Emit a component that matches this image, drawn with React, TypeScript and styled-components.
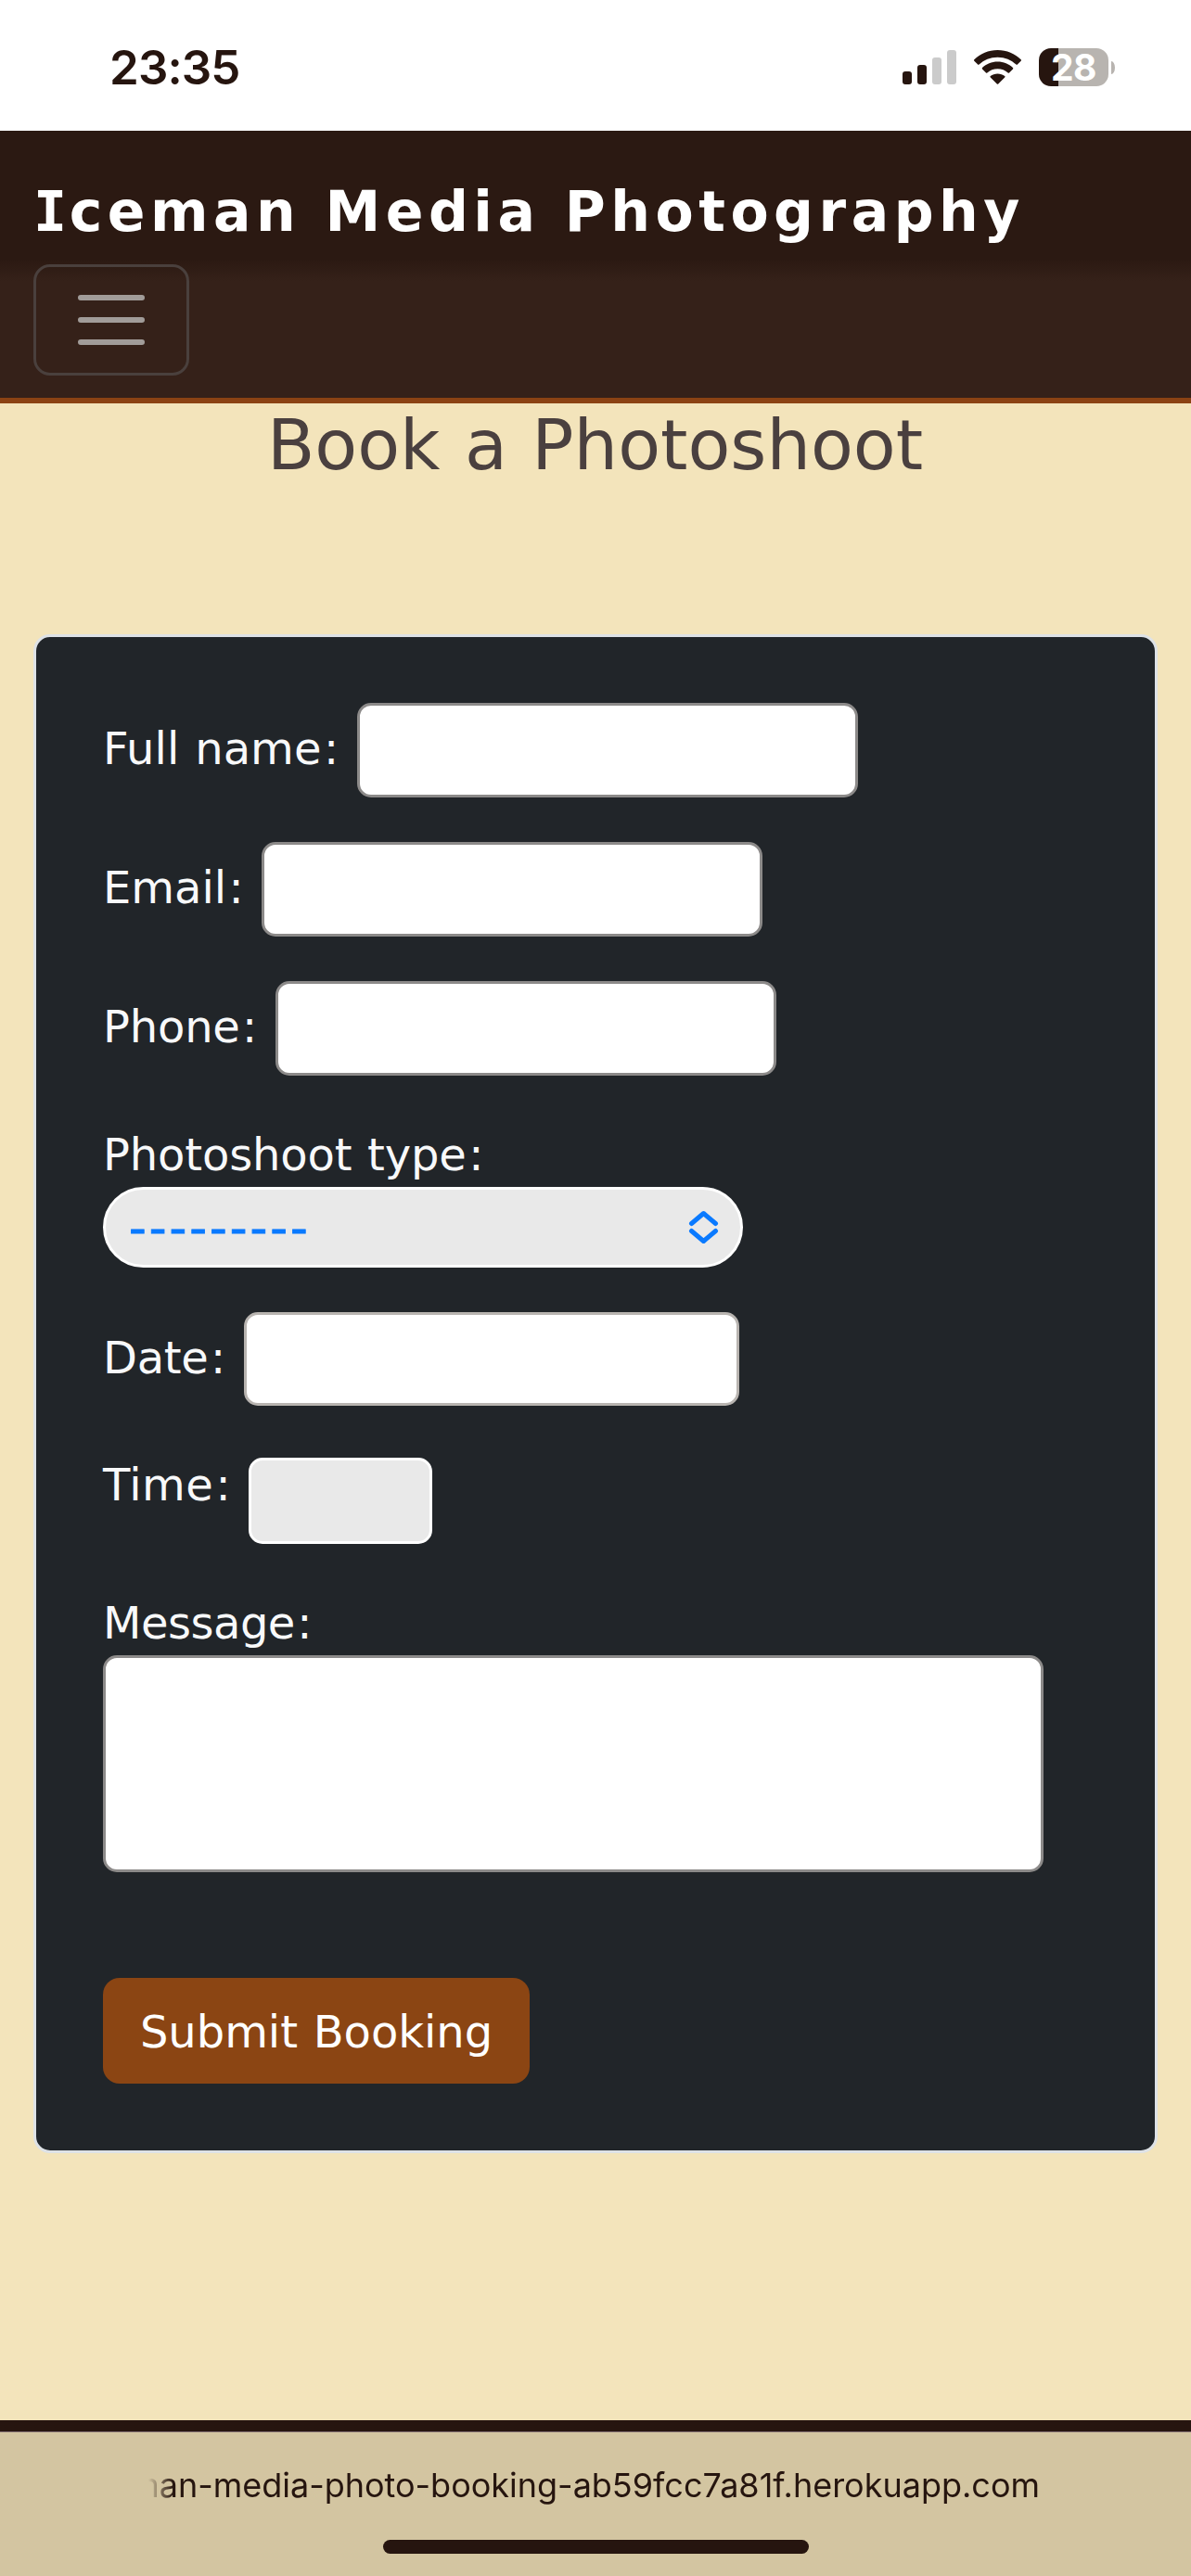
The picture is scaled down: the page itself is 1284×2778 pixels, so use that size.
import React from 'react';
import styled, { createGlobalStyle } from 'styled-components';

const GlobalStyle = createGlobalStyle`
  *, *::before, *::after { box-sizing: border-box; }
  html, body { margin: 0; padding: 0; }
  body { background: #f3e4bb; font-family: Verdana, "DejaVu Sans", sans-serif; }
  input, select, textarea, button { font: inherit; margin: 0; }
`;

const Screen = styled.div`
  width: 1284px;
  height: 2778px;
  display: flex;
  flex-direction: column;
  overflow: hidden;
  background: #f3e4bb;
`;

const StatusBar = styled.header`
  flex: none;
  height: 141px;
  padding: 0 82px 0 118px;
  display: flex;
  align-items: center;
  justify-content: space-between;
  background: #fff;
  color: #26150f;
  font-family: Inter, sans-serif;
`;

const Clock = styled.time`
  font-size: 51px;
  font-weight: 600;
  line-height: 60px;
  letter-spacing: -0.9px;
  padding-top: 5px;
`;

const StatusIcons = styled.div`
  display: flex;
  align-items: center;
  padding-top: 4px;
`;

const Signal = styled.svg`
  width: 58px;
  height: 37px;
  margin-right: 19px;
`;

const Wifi = styled.svg`
  width: 51px;
  height: 37px;
  margin-right: 19px;
`;

const Battery = styled.div`
  width: 75px;
  height: 41px;
  border-radius: 13px;
  background: linear-gradient(90deg, #26150f 21px, #b8b4b0 21px);
  color: #fff;
  font-size: 39px;
  font-weight: 700;
  line-height: 41px;
  letter-spacing: -0.5px;
  text-align: center;
`;

const BatteryTip = styled.span`
  width: 4px;
  height: 14px;
  margin-left: 3px;
  border-radius: 0 4px 4px 0 / 0 7px 7px 0;
  background: #b8b4b0;
`;

const Navbar = styled.nav`
  flex: none;
  height: 294px;
  padding: 42px 36px 0;
  border-bottom: 6px solid #8b4213;
  background: linear-gradient(180deg, #2b1912 0, #2b1912 138px, #352119 162px);
`;

const Brand = styled.div`
  color: #fff;
  font-size: 60px;
  font-weight: 700;
  line-height: 90px;
  letter-spacing: 5.5px;
  white-space: nowrap;
`;

const SlabCapital = styled.span`
  font-family: "DejaVu Sans Mono", monospace;
  margin-right: -3px;
`;

const Toggler = styled.button`
  display: flex;
  align-items: center;
  justify-content: center;
  width: 168px;
  height: 120px;
  margin-top: 12px;
  padding: 0;
  border: 3px solid #4a403d;
  border-radius: 18px;
  background: transparent;
`;

const TogglerIcon = styled.svg`
  width: 90px;
  height: 90px;
`;

const Main = styled.main`
  flex: 1;
  padding: 0 36px;
`;

const Heading = styled.h1`
  margin: 0 0 159px -1px;
  color: #4a403f;
  font-size: 75px;
  font-weight: 400;
  line-height: 90px;
  word-spacing: 2.6px;
  text-align: center;
`;

const Card = styled.form`
  display: flex;
  flex-direction: column;
  gap: 48px;
  padding: 71px 72px 72px;
  border: 3px solid #dee2e6;
  border-radius: 18px;
  background: #212529;
`;

const Field = styled.div<{ $stacked?: boolean }>`
  display: flex;
  flex-direction: ${(p) => (p.$stacked ? 'column' : 'row')};
  align-items: flex-start;
`;

const Label = styled.label<{ $line: number; $width?: number; $tracking?: number }>`
  flex: none;
  width: ${(p) => (p.$width ? `${p.$width}px` : 'auto')};
  height: 72px;
  color: #f8f9fa;
  font-size: 48px;
  line-height: ${(p) => p.$line}px;
  letter-spacing: ${(p) => p.$tracking ?? 0}px;
  word-spacing: 1.6px;
  white-space: nowrap;
`;

const Colon = styled.span`
  margin-left: 2.4px;
`;

const TextInput = styled.input<{ $date?: boolean }>`
  appearance: none;
  width: ${(p) => (p.$date ? 534 : 540)}px;
  height: ${(p) => (p.$date ? 101 : 102)}px;
  padding: 0 20px;
  border: 3px solid ${(p) => (p.$date ? '#b8b4b0' : '#8c8a89')};
  border-radius: 15px;
  background: #fff;
  outline: none;
`;

const SelectBox = styled.div`
  display: flex;
  align-items: center;
  justify-content: space-between;
  width: 690px;
  height: 87px;
  padding: 0 23px 0 25px;
  border: 3px solid #fff;
  border-radius: 44px;
  background: #e9e9e9;
  color: #0a7aff;
  line-height: 80px;
`;

const Placeholder = styled.span`
  font-size: 52px;
  letter-spacing: 3px;
  -webkit-text-stroke: 0.9px #0a7aff;
`;

const Chevrons = styled.svg`
  width: 33px;
  height: 37px;
`;

const TimeSelect = styled.div`
  width: 198px;
  height: 93px;
  margin-top: 8px;
  border: 3px solid #fff;
  border-radius: 15px;
  background: #e9e9e9;
`;

const MessageArea = styled.textarea`
  display: block;
  width: 1014px;
  height: 234px;
  border: 3px solid #8c8a89;
  border-radius: 15px;
  background: #fff;
  resize: none;
  outline: none;
`;

const SubmitButton = styled.button`
  align-self: flex-start;
  width: 460px;
  height: 114px;
  margin-top: 66px;
  padding: 1px 0 0;
  border: 0;
  border-radius: 18px;
  background: #8b4513;
  color: #fff;
  font-size: 48px;
  line-height: 72px;
  letter-spacing: -0.05px;
  word-spacing: 1.6px;
  white-space: nowrap;
`;

const PageFooterEdge = styled.div`
  flex: none;
  height: 13px;
  background: #26150f;
  border-bottom: 1px solid #79666a;
`;

const BrowserBar = styled.footer`
  flex: none;
  display: flex;
  flex-direction: column;
  align-items: center;
  height: 155px;
  padding-top: 35px;
  background: #d3c5a1;
`;

const Address = styled.div`
  display: flex;
  justify-content: flex-end;
  width: 984px;
  height: 50px;
  margin-right: 26px;
  color: #26150f;
  font-family: Inter, sans-serif;
  font-size: 36px;
  line-height: 44px;
  letter-spacing: -0.01px;
  white-space: nowrap;
  mask-image: linear-gradient(90deg, transparent 23px, #000 50px);
`;

const HomeIndicator = styled.div`
  width: 459px;
  height: 15px;
  margin-top: 31px;
  border-radius: 8px;
  background: #26150f;
`;

interface TextFieldProps {
  id: string;
  text: string;
  width: number;
  tracking?: number;
  date?: boolean;
}

function TextField({ id, text, width, tracking, date }: TextFieldProps) {
  return (
    <Field>
      <Label htmlFor={id} $line={99} $width={width} $tracking={tracking}>
        {text}
        <Colon>:</Colon>
      </Label>
      <TextInput id={id} type="text" $date={date} />
    </Field>
  );
}

export default function App() {
  return (
    <>
      <GlobalStyle />
      <Screen>
        <StatusBar>
          <Clock>23:35</Clock>
          <StatusIcons>
            <Signal viewBox="0 0 58 37">
              <rect x="0" y="23" width="10" height="14" rx="3" fill="#26150f" />
              <rect x="16" y="16" width="10" height="21" rx="3" fill="#26150f" />
              <rect x="32" y="8" width="10" height="29" rx="3" fill="#cbcbcb" />
              <rect x="48" y="0" width="10" height="37" rx="3" fill="#cbcbcb" />
            </Signal>
            <Wifi viewBox="0 0 51 37" fill="#26150f">
              <path d="M25.5 0C35.300 0 44.200 3.900 50.700 10.300Q51.300 11 50.700 11.700L46.800 15.600Q46.200 16.200 45.500 15.600C40.300 10.700 33.300 7.700 25.500 7.700S10.700 10.700 5.500 15.600Q4.800 16.200 4.200 15.600L.3 11.700Q-.3 11 .3 10.300C6.800 3.900 15.700 0 25.500 0Z" />
              <path d="M25.500 12.600C31.900 12.600 37.700 15.100 42 19.100Q42.600 19.700 42 20.400L38 24.400Q37.400 25 36.700 24.400C33.700 21.800 29.800 20.200 25.500 20.200S17.300 21.800 14.300 24.400Q13.600 25 13 24.400L9 20.400Q8.400 19.700 9 19.100C13.300 15.100 19.100 12.600 25.500 12.600Z" />
              <path d="M25.500 25.400C28.400 25.400 31.100 26.400 33.200 28.100Q33.900 28.800 33.200 29.500L26.200 36.500Q25.500 37.200 24.800 36.500L17.800 29.500Q17.100 28.800 17.800 28.100C19.900 26.400 22.600 25.400 25.500 25.400Z" />
            </Wifi>
            <Battery>28</Battery>
            <BatteryTip />
          </StatusIcons>
        </StatusBar>

        <Navbar>
          <Brand>
            <SlabCapital>I</SlabCapital>ceman Media Photography
          </Brand>
          <Toggler type="button" aria-label="Toggle navigation">
            <TogglerIcon viewBox="0 0 30 30">
              <path
                d="M4 7h22M4 15h22M4 23h22"
                stroke="#a19c99"
                strokeWidth="2"
                strokeLinecap="round"
              />
            </TogglerIcon>
          </Toggler>
        </Navbar>

        <Main>
          <Heading>Book a Photoshoot</Heading>
          <Card>
            <TextField id="name" text="Full name" width={274} tracking={0.05} />
            <TextField id="email" text="Email" width={171} />
            <TextField id="phone" text="Phone" width={186} tracking={-0.2} />
            <Field $stacked>
              <Label $line={74} $tracking={-0.15}>
                Photoshoot type<Colon>:</Colon>
              </Label>
              <SelectBox>
                <Placeholder>---------</Placeholder>
                <Chevrons viewBox="0 0 33 37" fill="none" stroke="#0a7aff" strokeWidth="5">
                  <path
                    d="M3.500 14.500L16.500 3.500L29.500 14.500M3.500 22.500L16.500 33.500L29.500 22.500"
                    strokeLinecap="round"
                    strokeLinejoin="round"
                  />
                </Chevrons>
              </SelectBox>
            </Field>
            <TextField id="date" text="Date" width={152} tracking={-0.3} date />
            <Field>
              <Label $line={74} $width={157} $tracking={0.4}>
                Time<Colon>:</Colon>
              </Label>
              <TimeSelect />
            </Field>
            <Field $stacked>
              <Label htmlFor="message" $line={74} $tracking={-0.5}>
                Message<Colon>:</Colon>
              </Label>
              <MessageArea id="message" />
            </Field>
            <SubmitButton type="button">Submit Booking</SubmitButton>
          </Card>
        </Main>

        <PageFooterEdge />
        <BrowserBar>
          <Address>man-media-photo-booking-ab59fcc7a81f.herokuapp.com</Address>
          <HomeIndicator />
        </BrowserBar>
      </Screen>
    </>
  );
}
